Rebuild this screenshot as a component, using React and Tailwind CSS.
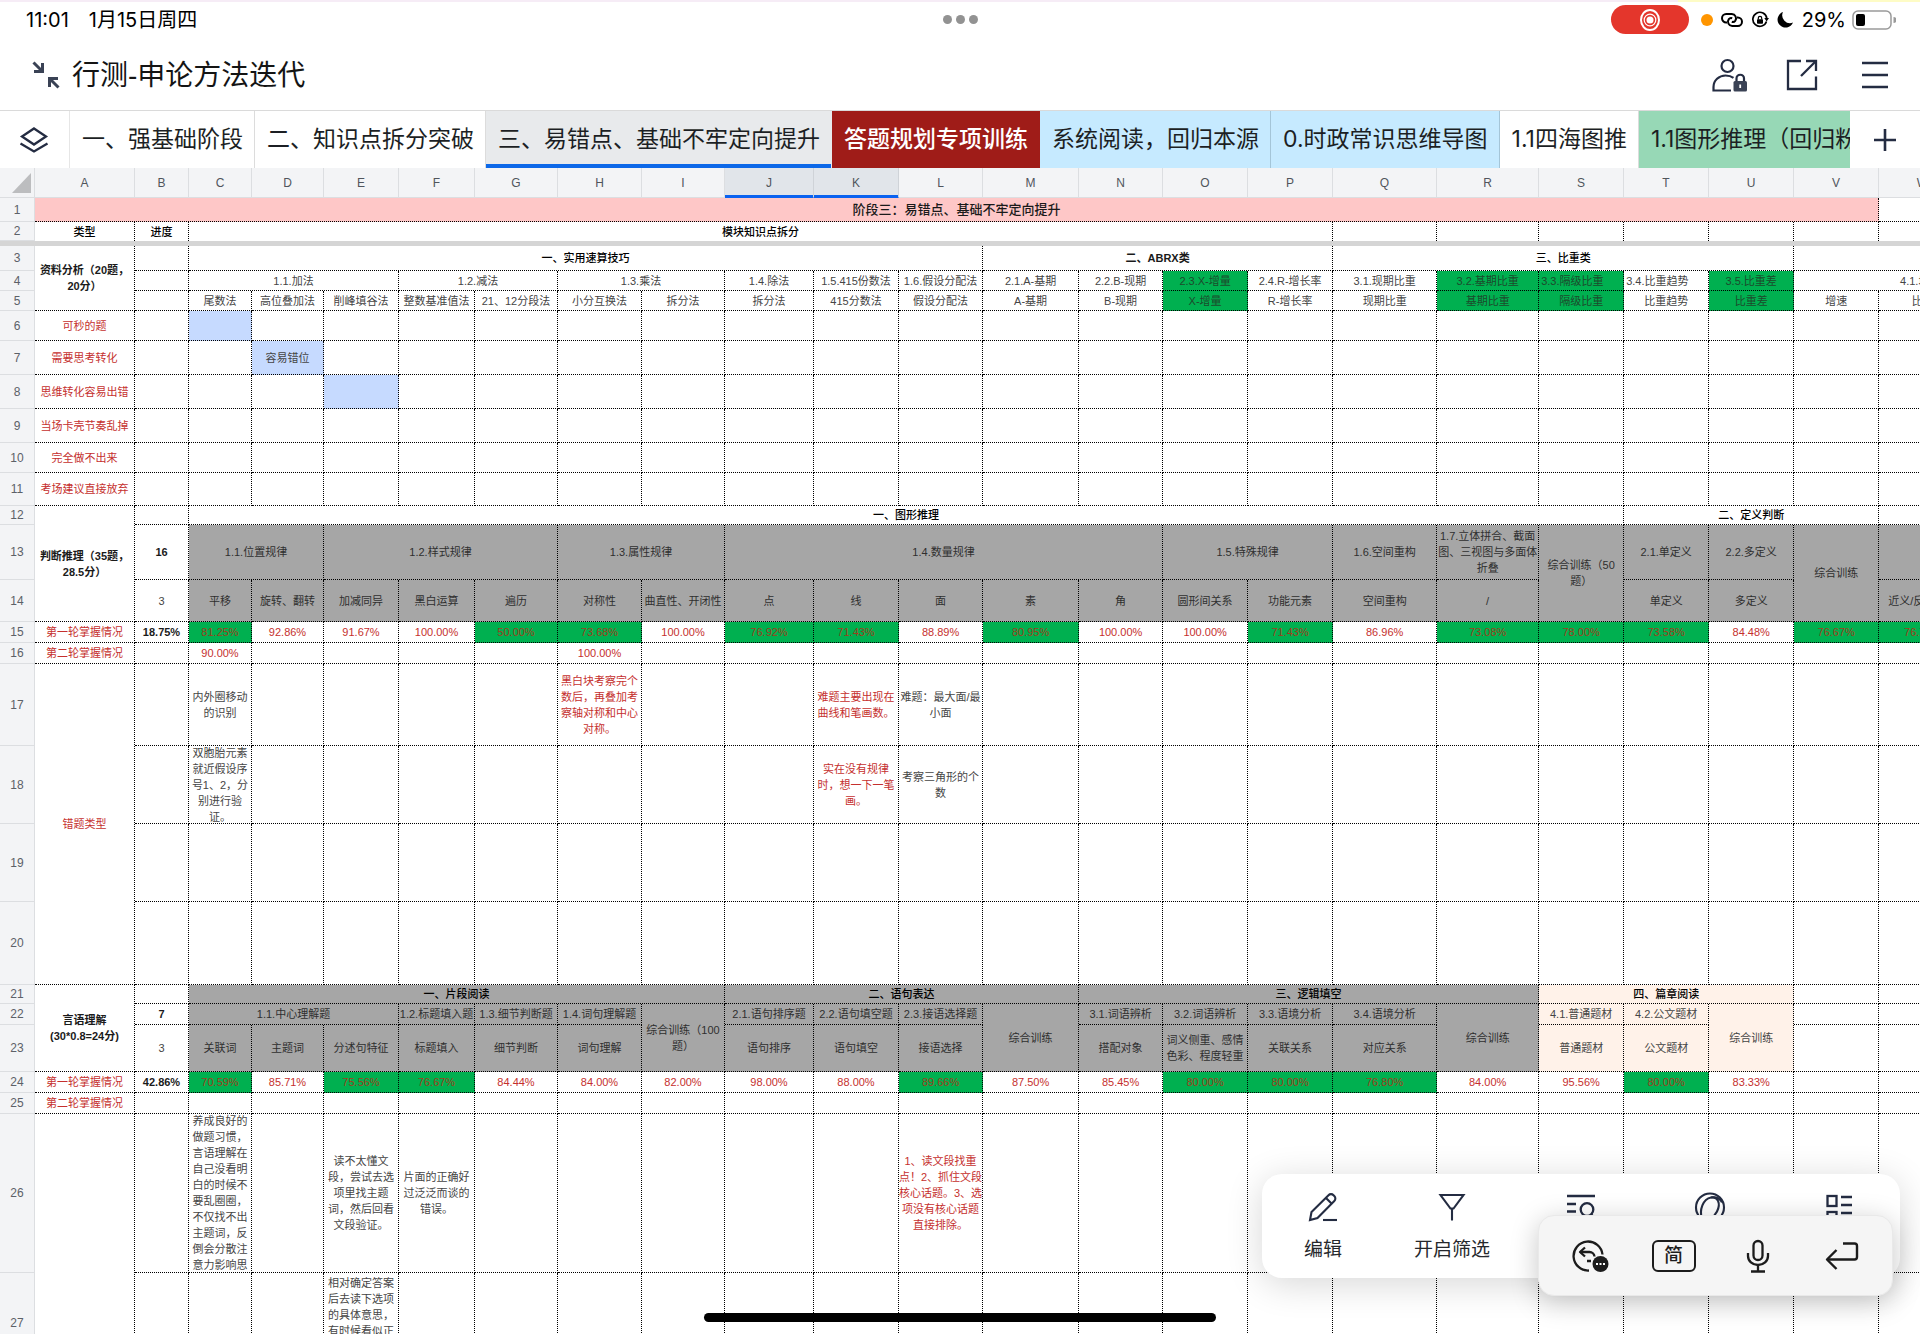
import clsx from 'clsx';

const COLUMNS = [
  ['A', 100], ['B', 54], ['C', 63], ['D', 72], ['E', 75], ['F', 76], ['G', 83], ['H', 84],
  ['I', 83], ['J', 89], ['K', 85], ['L', 84], ['M', 96], ['N', 84], ['O', 85], ['P', 85],
  ['Q', 104], ['R', 102], ['S', 85], ['T', 85], ['U', 85], ['V', 85], ['W', 88], ['X', 80],
];
const ROW_HEAD = 35;
const SHEET_WIDTH = COLUMNS.reduce((sum, [, w]) => sum + w, ROW_HEAD);

const SELECTED = ['J', 'K'];

const TONES = {
  plain: 'text-[#454545]',
  bold: 'font-bold text-[#1a1a1a]',
  head: 'font-medium text-black',
  red: 'text-[#c5302e]',
  title: 'bg-[#fec7c7] text-[13px] font-medium text-[#1a1a1a]',
  green: 'bg-[#00b050] text-[#1d4a2c]',
  greenRed: 'bg-[#00b050] text-[#9c3f1c]',
  gray: 'bg-[#a6a6a6] text-[#2f2f2f]',
  grayHead: 'bg-[#a6a6a6] font-medium text-black',
  blue: 'bg-[#c6daff] text-[#454545]',
  peach: 'bg-[#fff2e9] text-[#454545]',
  peachHead: 'bg-[#fff2e9] font-medium text-black',
};

// cell(text, tone, colSpan, rowSpan)
const cell = (text, tone = 'plain', cols = 1, rows = 1, left = false) => ({
  text, tone, cols, rows, left,
});
const blanks = (n) => Array.from({ length: n }, () => cell(''));
const all = (tone, ...texts) => texts.map((t) => cell(t, tone));
// a leading "!" marks a highlighted score
const scores = (...values) =>
  values.map((v) => (v[0] === '!' ? cell(v.slice(1), 'greenRed') : cell(v, 'red')));

const FROZEN_ROWS = [
  { n: 1, h: 24, cells: [cell('阶段三：易错点、基础不牢定向提升', 'title', 22), ...blanks(2)] },
  {
    n: 2,
    h: 19,
    noLine: true,
    cells: [cell('类型', 'head'), cell('进度', 'head'), cell('模块知识点拆分', 'head', 14), ...blanks(8)],
  },
];

const ROWS = [
  {
    n: 3,
    h: 25,
    cells: [
      cell('资料分析（20题，\n20分）', 'bold', 1, 3),
      cell(''),
      cell('一、实用速算技巧', 'head', 10),
      cell('二、ABRX类', 'bold', 4),
      cell('三、比重类', 'head', 5),
      cell('', 'plain', 3),
    ],
  },
  {
    n: 4,
    h: 20,
    cells: [
      cell(''),
      cell('1.1.加法', 'plain', 3),
      cell('1.2.减法', 'plain', 2),
      cell('1.3.乘法', 'plain', 2),
      ...all('plain', '1.4.除法', '1.5.415份数法', '1.6.假设分配法', '2.1.A-基期', '2.2.B-现期'),
      cell('2.3.X-增量', 'green'),
      ...all('plain', '2.4.R-增长率', '3.1.现期比重'),
      cell('3.2.基期比重', 'green'),
      cell('3.3.隔级比重', 'green', 1, 1, true),
      cell('3.4.比重趋势', 'plain', 1, 1, true),
      cell('3.5.比重差', 'green'),
      cell('4.1.增速', 'plain', 3),
    ],
  },
  {
    n: 5,
    h: 20,
    cells: [
      cell(''),
      ...all('plain', '尾数法', '高位叠加法', '削峰填谷法', '整数基准值法', '21、12分段法', '小分互换法'),
      ...all('plain', '拆分法', '拆分法', '415分数法', '假设分配法', 'A-基期', 'B-现期'),
      cell('X-增量', 'green'),
      ...all('plain', 'R-增长率', '现期比重'),
      ...all('green', '基期比重', '隔级比重'),
      cell('比重趋势'),
      cell('比重差', 'green'),
      ...all('plain', '增速', '比重', ''),
    ],
  },
  { n: 6, h: 30, cells: [cell('可秒的题', 'red'), cell(''), cell('', 'blue'), ...blanks(21)] },
  { n: 7, h: 34, cells: [cell('需要思考转化', 'red'), ...blanks(2), cell('容易错位', 'blue'), ...blanks(20)] },
  { n: 8, h: 34, cells: [cell('思维转化容易出错', 'red'), ...blanks(3), cell('', 'blue'), ...blanks(19)] },
  { n: 9, h: 34, cells: [cell('当场卡壳节奏乱掉', 'red'), ...blanks(23)] },
  { n: 10, h: 30, cells: [cell('完全做不出来', 'red'), ...blanks(23)] },
  { n: 11, h: 33, cells: [cell('考场建议直接放弃', 'red'), ...blanks(23)] },
  {
    n: 12,
    h: 19,
    cells: [
      cell('判断推理（35题，\n28.5分）', 'bold', 1, 3),
      cell(''),
      cell('一、图形推理', 'head', 17),
      cell('二、定义判断', 'head', 3),
      cell('', 'plain', 2),
    ],
  },
  {
    n: 13,
    h: 55,
    cells: [
      cell('16', 'bold'),
      cell('1.1.位置规律', 'gray', 2),
      cell('1.2.样式规律', 'gray', 3),
      cell('1.3.属性规律', 'gray', 2),
      cell('1.4.数量规律', 'gray', 5),
      cell('1.5.特殊规律', 'gray', 2),
      cell('1.6.空间重构', 'gray'),
      cell('1.7.立体拼合、截面\n图、三视图与多面体\n折叠', 'gray'),
      cell('综合训练（50\n题）', 'gray', 1, 2),
      ...all('gray', '2.1.单定义', '2.2.多定义'),
      cell('综合训练', 'gray', 1, 2),
      cell('', 'gray', 2),
    ],
  },
  {
    n: 14,
    h: 42,
    cells: [
      cell('3'),
      ...all('gray', '平移', '旋转、翻转', '加减同异', '黑白运算', '遍历', '对称性', '曲直性、开闭性'),
      ...all('gray', '点', '线', '面', '素', '角', '圆形间关系', '功能元素', '空间重构', '/'),
      ...all('gray', '单定义', '多定义', '近义/反义关系', ''),
    ],
  },
  {
    n: 15,
    h: 21,
    cells: [
      cell('第一轮掌握情况', 'red'),
      cell('18.75%', 'bold'),
      ...scores('!81.25%', '92.86%', '91.67%', '100.00%', '!50.00%', '!73.68%', '100.00%'),
      ...scores('!76.92%', '!71.43%', '88.89%', '!80.95%', '100.00%', '100.00%', '!71.43%'),
      ...scores('86.96%', '!73.08%', '!78.00%', '!73.58%', '84.48%', '!76.67%', '!76.74%', ''),
    ],
  },
  {
    n: 16,
    h: 21,
    cells: [
      cell('第二轮掌握情况', 'red'),
      cell(''),
      cell('90.00%', 'red'),
      ...blanks(4),
      cell('100.00%', 'red'),
      ...blanks(16),
    ],
  },
  {
    n: 17,
    h: 82,
    cells: [
      cell('错题类型', 'red', 1, 4),
      cell(''),
      cell('内外圈移动\n的识别'),
      ...blanks(4),
      cell('黑白块考察完个\n数后，再叠加考\n察轴对称和中心\n对称。', 'red'),
      ...blanks(2),
      cell('难题主要出现在\n曲线和笔画数。', 'red'),
      cell('难题：最大面/最\n小面'),
      ...blanks(12),
    ],
  },
  {
    n: 18,
    h: 78,
    cells: [
      cell(''),
      cell('双胞胎元素\n就近假设序\n号1、2，分\n别进行验\n证。'),
      ...blanks(7),
      cell('实在没有规律\n时，想一下一笔\n画。', 'red'),
      cell('考察三角形的个\n数'),
      ...blanks(12),
    ],
  },
  { n: 19, h: 78, cells: blanks(23) },
  { n: 20, h: 83, cells: blanks(23) },
  {
    n: 21,
    h: 19,
    cells: [
      cell('言语理解\n(30*0.8=24分)', 'bold', 1, 3),
      cell(''),
      cell('一、片段阅读', 'grayHead', 7),
      cell('二、语句表达', 'grayHead', 4),
      cell('三、逻辑填空', 'grayHead', 5),
      cell('四、篇章阅读', 'peachHead', 3),
      ...blanks(3),
    ],
  },
  {
    n: 22,
    h: 21,
    cells: [
      cell('7', 'bold'),
      cell('1.1.中心理解题', 'gray', 3),
      ...all('gray', '1.2.标题填入题', '1.3.细节判断题', '1.4.词句理解题'),
      cell('综合训练（100\n题）', 'gray', 1, 2),
      ...all('gray', '2.1.语句排序题', '2.2.语句填空题', '2.3.接语选择题'),
      cell('综合训练', 'gray', 1, 2),
      ...all('gray', '3.1.词语辨析', '3.2.词语辨析', '3.3.语境分析', '3.4.语境分析'),
      cell('综合训练', 'gray', 1, 2),
      ...all('peach', '4.1.普通题材', '4.2.公文题材'),
      cell('综合训练', 'peach', 1, 2),
      ...blanks(3),
    ],
  },
  {
    n: 23,
    h: 47,
    cells: [
      cell('3'),
      ...all('gray', '关联词', '主题词', '分述句特征', '标题填入', '细节判断', '词句理解'),
      ...all('gray', '语句排序', '语句填空', '接语选择'),
      ...all('gray', '搭配对象', '词义侧重、感情\n色彩、程度轻重', '关联关系', '对应关系'),
      ...all('peach', '普通题材', '公文题材'),
      ...blanks(3),
    ],
  },
  {
    n: 24,
    h: 21,
    cells: [
      cell('第一轮掌握情况', 'red'),
      cell('42.86%', 'bold'),
      ...scores('!70.59%', '85.71%', '!75.56%', '!76.67%', '84.44%', '84.00%', '82.00%'),
      ...scores('98.00%', '88.00%', '!89.66%', '87.50%', '85.45%', '!80.00%', '!80.00%'),
      ...scores('!76.80%', '84.00%', '95.56%', '!80.00%', '83.33%'),
      ...blanks(3),
    ],
  },
  { n: 25, h: 21, cells: [cell('第二轮掌握情况', 'red'), ...blanks(23)] },
  {
    n: 26,
    h: 159,
    cells: [
      cell('', 'plain', 1, 2),
      cell(''),
      cell(
        '养成良好的\n做题习惯，\n言语理解在\n自己没看明\n白的时候不\n要乱圈圈，\n不仅找不出\n主题词，反\n倒会分散注\n意力影响思'
      ),
      cell(''),
      cell('读不太懂文\n段，尝试去选\n项里找主题\n词，然后回看\n文段验证。'),
      cell('片面的正确好\n过泛泛而谈的\n错误。'),
      ...blanks(5),
      cell('1、读文段找重\n点！2、抓住文段\n核心话题。3、选\n项没有核心话题\n直接排除。', 'red'),
      ...blanks(12),
    ],
  },
  {
    n: 27,
    h: 100,
    cells: [
      ...blanks(3),
      cell('相对确定答案\n后去读下选项\n的具体意思，\n有时候看似正\n确的选项其实\n偷换概念。'),
      ...blanks(19),
    ],
  },
];

const TABS = [
  { label: '一、强基础阶段', style: 'bg-white border-[#dcdcdc]' },
  { label: '二、知识点拆分突破', style: 'bg-white border-[#dcdcdc]' },
  { label: '三、易错点、基础不牢定向提升', style: 'bg-[#e8eaec] border-[#e8eaec]', active: true },
  { label: '答题规划专项训练', style: 'bg-[#9f1c18] border-[#9f1c18] text-white font-medium' },
  { label: '系统阅读，回归本源', style: 'bg-[#c6eaff] border-[#a4c5d8]' },
  { label: '0.时政常识思维导图', style: 'bg-[#c6eaff] border-[#a4c5d8]' },
  { label: '1.1四海图推', style: 'bg-white border-[#dcdcdc]' },
  { label: '1.1图形推理（回归粉笔）', style: 'bg-[#97d8b6] border-[#97d8b6]' },
];

function Icon({ w, h = w, sw = 2, className, children }) {
  return (
    <svg
      width={w}
      height={h}
      viewBox={`0 0 ${w} ${h}`}
      fill="none"
      stroke="currentColor"
      strokeWidth={sw}
      className={clsx('shrink-0', className)}
      aria-hidden="true"
    >
      {children}
    </svg>
  );
}

function StatusBar() {
  return (
    <div className="grid h-[39px] grid-cols-3 items-center pr-6 pl-[26px] font-['Inter','Noto_Sans_CJK_SC',sans-serif] text-xl text-black">
      <div className="flex gap-5">
        <span>11:01</span>
        <span>1月15日周四</span>
      </div>
      <div className="flex justify-center gap-1">
        <span className="size-[9px] rounded-full bg-[#929292]" />
        <span className="size-[9px] rounded-full bg-[#929292]" />
        <span className="size-[9px] rounded-full bg-[#929292]" />
      </div>
      <div className="flex items-center justify-end">
        <span className="mr-3 flex h-[29px] w-[78px] items-center justify-center rounded-full bg-[#e4362c] text-white">
          <Icon w={22} h={24} sw={2}>
            <ellipse cx="11" cy="12" rx="9" ry="10" />
            <circle cx="11" cy="12" r="5.8" strokeWidth="1.2" />
            <circle cx="11" cy="12" r="3.5" fill="currentColor" stroke="none" />
          </Icon>
        </span>
        <span className="mr-2 size-3 rounded-full bg-[#ff9500]" />
        <Icon w={22} h={16} sw={2} className="mr-2">
          <path d="M6 10.5H5.2a4.2 4.2 0 0 1 0-8.4h5.6a4.2 4.2 0 0 1 3.4 6.7 3 3 0 0 1-3.4.9" />
          <path d="M16 5.5h.8a4.2 4.2 0 0 1 0 8.4h-5.6a4.2 4.2 0 0 1-3.4-6.7 3 3 0 0 1 3.4-.9" />
        </Icon>
        <Icon w={18} sw={1.7} className="mr-2">
          <path d="M15.5 10.5A7 7 0 1 1 15.8 7.5" />
          <path d="M13.3 7H18l-2.4 3.5z" fill="currentColor" stroke="none" />
          <rect x="6" y="8.3" width="6" height="4.5" rx="0.8" fill="currentColor" stroke="none" />
          <path d="M7.3 8.5V7a1.7 1.7 0 0 1 3.4 0v1.5" strokeWidth="1.2" />
        </Icon>
        <Icon w={17} sw={0} className="mr-2">
          <path d="M6 1A8 8 0 1 0 16 11.5 7.8 7.8 0 0 1 6 1z" fill="currentColor" />
        </Icon>
        <span className="mr-1.5">29%</span>
        <Icon w={44} h={20} sw={1.5}>
          <rect x="1" y="1" width="38" height="18" rx="5" stroke="#9a9a9a" />
          <rect x="4" y="4" width="9" height="12" rx="2" fill="currentColor" stroke="none" />
          <path d="M41.5 7v6a3 3 0 0 0 0-6z" fill="#9a9a9a" stroke="none" />
        </Icon>
      </div>
    </div>
  );
}

function TitleBar() {
  return (
    <header className="flex h-[72px] items-center justify-between border-b border-[#dadada] px-8">
      <div className="flex items-center gap-3">
        <button type="button" aria-label="退出全屏" className="text-[#3a4255]">
          <Icon w={28} sw={3}>
            <path d="M1.5 1.5l8 8" />
            <path d="M10.500 2v8.500H2" />
            <path d="M26.5 26.500l-8-8" />
            <path d="M17.500 26v-8.500H26" />
          </Icon>
        </button>
        <h1 className="pt-0.5 text-[28px] leading-9 text-[#141414]">行测-申论方法迭代</h1>
      </div>
      <div className="flex items-center gap-[38px] text-[#242c42]">
        <button type="button" aria-label="权限">
          <Icon w={36} h={34} sw={2.2}>
            <circle cx="15.5" cy="8" r="6" />
            <path d="M19 32.5H1.5V29c0-6.5 5.5-11.500 12-11.500 3 0 6 .8 8 2.3" />
            <rect x="21.5" y="23" width="13.5" height="10.5" rx="1.5" fill="#3a4255" stroke="none" />
            <path d="M24.5 23v-2.5a3.7 3.7 0 0 1 7.5 0V23" />
            <path d="M28.2 26.500V30" stroke="#fff" strokeWidth="1.8" />
          </Icon>
        </button>
        <button type="button" aria-label="分享">
          <Icon w={32} sw={2.3}>
            <path d="M15 2H2v28h28V17.5" />
            <path d="M20 2h10v10" />
            <path d="M30 2L15 17" />
          </Icon>
        </button>
        <button type="button" aria-label="菜单" className="ml-1.5">
          <Icon w={26} h={28} sw={2.4}>
            <path d="M0 2h26M0 14h26M0 26h26" />
          </Icon>
        </button>
      </div>
    </header>
  );
}

function TabStrip() {
  return (
    <div className="flex h-[57px] items-stretch text-[#242c42]">
      <button
        type="button"
        aria-label="所有工作表"
        className="flex w-[70px] shrink-0 items-center justify-center border-r border-[#e6e6e6] pr-0.5"
      >
        <Icon w={30} h={26} sw={2.3}>
          <path d="M15 1.5l12 8-12 8-12-8z" />
          <path d="M1.5 16.500l13.500 8 13.500-8" />
        </Icon>
      </button>
      <nav className="flex min-w-0 flex-1 overflow-hidden font-['Inter','Noto_Sans_CJK_SC',sans-serif] text-[23px] text-[#1c1f24]">
        {TABS.map((tab) => (
          <button
            key={tab.label}
            type="button"
            className={clsx(
              'shrink-0 border-r pr-[11px] pl-3 whitespace-nowrap',
              tab.style,
              tab.active && 'shadow-[inset_0_-4px_0_#0c68e8]'
            )}
          >
            {tab.label}
          </button>
        ))}
      </nav>
      <button
        type="button"
        aria-label="新建工作表"
        className="flex w-[70px] shrink-0 items-center justify-center"
      >
        <Icon w={24} sw={2.6}>
          <path d="M12 1v22M1 12h22" />
        </Icon>
      </button>
    </div>
  );
}

function SheetTable({ rows, showHead = false, label }) {
  return (
    <table
      aria-label={label}
      className="table-fixed border-separate border-spacing-0 text-[11px] leading-4"
      style={{ width: SHEET_WIDTH }}
    >
      <colgroup>
        <col style={{ width: ROW_HEAD }} />
        {COLUMNS.map(([name, width]) => (
          <col key={name} style={{ width }} />
        ))}
      </colgroup>
      {showHead && (
        <thead>
          <tr className="h-[30px]">
            <th className="border-r border-b border-[#dcdee1] bg-[#f3f4f6] p-0" aria-label="全选">
              <Icon w={19} h={20} sw={0} className="ml-3">
                <path d="M19 0v20H0z" fill="#bcbdbf" />
              </Icon>
            </th>
            {COLUMNS.map(([name]) => (
              <th
                key={name}
                scope="col"
                className={clsx(
                  'border-r border-b p-0 text-xs font-normal text-[#50555c]',
                  SELECTED.includes(name)
                    ? 'border-r-[#cfd3d8] border-b-[#0a62f0] bg-[#e1e5ea] shadow-[inset_0_-2px_0_#0a62f0]'
                    : 'border-[#dcdee1] bg-[#f3f4f6]'
                )}
              >
                {name}
              </th>
            ))}
          </tr>
        </thead>
      )}
      <tbody>
        {rows.map((row) => (
          <tr key={row.n} style={{ height: row.h }}>
            <th
              scope="row"
              className="border-r border-b border-[#dcdee1] bg-[#f3f4f6] p-0 text-xs leading-4 font-normal text-[#5c6168]"
            >
              {row.n}
            </th>
            {row.cells.map((c, i) => (
              <td
                key={i}
                colSpan={c.cols}
                rowSpan={c.rows}
                className={clsx(
                  'border-r border-dotted border-black p-0 align-middle',
                  !row.noLine && 'border-b',
                  TONES[c.tone]
                )}
              >
                {c.text && (
                  <div
                    className={clsx(
                      'flex text-center whitespace-pre',
                      c.left ? 'justify-start pl-0.5' : 'justify-center',
                      c.text.includes('\n') && '-my-2'
                    )}
                  >
                    {c.text}
                  </div>
                )}
              </td>
            ))}
          </tr>
        ))}
      </tbody>
    </table>
  );
}

function ActionPanel() {
  return (
    <div className="absolute right-5 bottom-14 grid h-[104px] w-[638px] grid-cols-[repeat(5,129px)] justify-center rounded-[20px] bg-white pt-[18px] text-[#242c42] shadow-[0_6px_36px_rgba(0,0,0,0.16)]">
      <button type="button" className="flex flex-col items-center gap-4">
        <Icon w={30} sw={2.1}>
          <path d="M2 28l1.5-8L20.5 3.2a3.5 3.5 0 0 1 5 0l.8.8a3.5 3.5 0 0 1 0 5L9.500 26z" />
          <path d="M18 6l6 6" />
          <path d="M15 28h14" />
        </Icon>
        <span className="text-[19px] leading-6 text-[#26282c]">编辑</span>
      </button>
      <button type="button" className="flex flex-col items-center gap-4">
        <Icon w={28} h={30} sw={2.1}>
          <path d="M2.5 3h23l-10 13.500h-3z" />
          <path d="M14 16v12.500" />
        </Icon>
        <span className="text-[19px] leading-6 text-[#26282c]">开启筛选</span>
      </button>
      <button type="button" aria-label="查找" className="flex flex-col items-center">
        <Icon w={30} sw={2.3}>
          <path d="M1 4h28M1 12h9M1 19.500h9" />
          <circle cx="21" cy="17.5" r="6.3" />
          <path d="M25 22l4 5" />
        </Icon>
      </button>
      <button type="button" aria-label="护眼" className="flex flex-col items-center">
        <Icon w={32} h={30} sw={2.1}>
          <circle cx="16" cy="15.5" r="14" />
          <path d="M8 27C5 18 9 7 17 5.5c7-1 10 6 6 14-2 4-5 7-8 9" />
          <path d="M17 5.5c6-1 10 2 11 5" />
        </Icon>
      </button>
      <button type="button" aria-label="卡片视图" className="flex flex-col items-center">
        <Icon w={28} h={30} sw={2.3}>
          <rect x="2.5" y="4" width="9" height="10" />
          <rect x="2.5" y="20" width="9" height="9" />
          <path d="M16 5h11M16 13h11M16 21h11M16 28h11" />
        </Icon>
      </button>
    </div>
  );
}

function KeyboardPanel() {
  return (
    <div className="absolute right-[27px] bottom-[38px] grid h-[81px] w-[355px] grid-cols-[repeat(4,84px)] items-center justify-center justify-items-center rounded-[16px] border border-[#e9e9e9] bg-[#f5f5f5] text-[#1c1c1c] shadow-[0_6px_28px_rgba(0,0,0,0.22)]">
      <button type="button" aria-label="撤销">
        <Icon w={38} h={34} sw={2.3}>
          <path d="M18 31.500a14.500 14.500 0 1 1 13.500-16" />
          <path d="M14 8.500l-5 4.500 5 4.500" strokeLinejoin="round" />
          <path d="M9.500 13h9a5 5 0 0 1 5 4.500M16 22h4" />
          <circle cx="29.5" cy="25" r="8" fill="currentColor" stroke="none" />
          <path d="M25 25h2M28.500 25h2M32 25h2" stroke="#fff" strokeWidth="1.8" />
        </Icon>
      </button>
      <button
        type="button"
        className="flex h-8 w-[44px] items-center justify-center rounded-md border-2 border-[#1c1c1c] text-[19px] leading-6 font-medium"
      >
        简
      </button>
      <button type="button" aria-label="语音输入">
        <Icon w={24} h={34} sw={2.3}>
          <rect x="7.5" y="2" width="9" height="19" rx="4.5" />
          <path d="M2 14v3a10 9 0 0 0 20 0v-3M12 26v6M5 32.500h14" />
        </Icon>
      </button>
      <button type="button" aria-label="换行">
        <Icon w={34} h={30} sw={2.4}>
          <path d="M18 2.500h11.500a2.500 2.500 0 0 1 2.500 2.500v11a2.500 2.500 0 0 1-2.500 2.500H2" />
          <path d="M11.500 9L2 18.500l9.500 9.500" strokeLinejoin="round" />
        </Icon>
      </button>
    </div>
  );
}

export default function App() {
  return (
    <div className="relative flex h-screen flex-col overflow-hidden bg-white font-['Liberation_Sans','Noto_Sans_CJK_SC',sans-serif]">
      <div className="absolute inset-x-0 top-0 flex h-0.5">
        <span className="flex-1 bg-[#f6ecf6]" />
        <span className="w-[242px] bg-[#fefcc6]" />
      </div>
      <StatusBar />
      <TitleBar />
      <TabStrip />
      <main className="min-h-0 flex-1 overflow-hidden">
        <SheetTable rows={FROZEN_ROWS} showHead label="冻结行" />
        <div className="h-[5px] bg-[#d5d5d5]" />
        <SheetTable rows={ROWS} label="易错点、基础不牢定向提升" />
      </main>
      <ActionPanel />
      <KeyboardPanel />
      <div className="absolute bottom-3 left-1/2 h-[9px] w-[512px] -translate-x-1/2 rounded-full bg-black" />
    </div>
  );
}
